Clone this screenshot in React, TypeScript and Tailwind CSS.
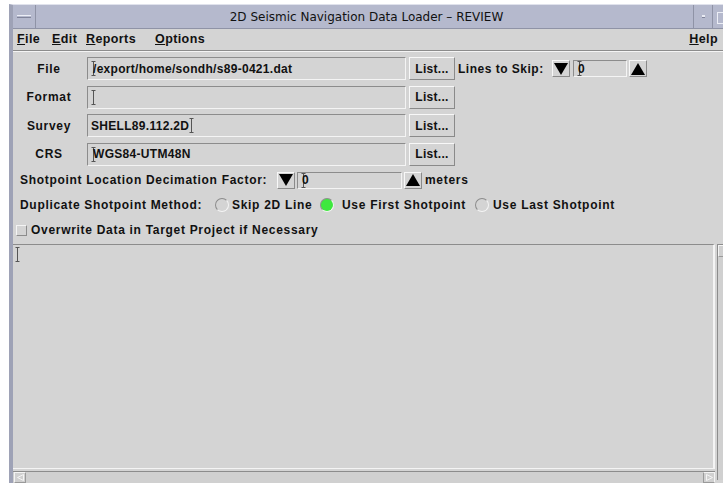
import type { ReactNode } from 'react'

const FONT = "font-['Liberation_Sans',Arial,sans-serif]"

// little text cursor drawn inside the entry fields
function Caret() {
  return (
    <svg width="5" height="15" viewBox="0 0 5 15" className="shrink-0">
      <path d="M0.5 0.5h4M0.5 14.5h4M2.5 0.5v14" stroke="#555" strokeWidth="1" fill="none" />
    </svg>
  )
}

function Field({ children, className = '' }: { children?: ReactNode; className?: string }) {
  return (
    <div className={`flex items-center h-full bg-[#d4d4d4] border border-t-[#8c8c8c] border-l-[#8c8c8c] border-b-[#f4f4f4] border-r-[#f4f4f4] px-[3px] text-[12px] font-bold tracking-[0.3px] text-[#111] ${className}`}>
      {children}
    </div>
  )
}

function Button({ children, className = '' }: { children: ReactNode; className?: string }) {
  return (
    <div className={`flex items-center justify-center bg-[#d4d4d4] border border-t-[#f8f8f8] border-l-[#f8f8f8] border-b-[#8a8a8a] border-r-[#8a8a8a] text-[12px] font-bold text-[#111] ${className}`}>
      {children}
    </div>
  )
}

function Arrow({ up }: { up?: boolean }) {
  return (
    <Button className="w-[18px] h-[17px]">
      <svg width="14" height="12" viewBox="0 0 14 12">
        {up ? <path d="M7 0L14 12H0Z" fill="#000" /> : <path d="M0 0H14L7 12Z" fill="#000" />}
      </svg>
    </Button>
  )
}

function Radio({ on }: { on?: boolean }) {
  return (
    <span className={`w-[14px] h-[14px] rounded-full shrink-0 border ${on ? 'bg-[#3ee83e] border-t-[#909090] border-l-[#909090] border-b-[#f4f4f4] border-r-[#f4f4f4]' : 'bg-[#d4d4d4] border-t-[#8c8c8c] border-l-[#8c8c8c] border-b-[#f4f4f4] border-r-[#f4f4f4]'}`} />
  )
}

const rows = [
  { label: 'File', value: '/export/home/sondh/s89-0421.dat', caret: 'start' },
  { label: 'Format', value: '', caret: 'start' },
  { label: 'Survey', value: 'SHELL89.112.2D', caret: 'end' },
  { label: 'CRS', value: 'WGS84-UTM48N', caret: 'start' },
]

export default function App() {
  return (
    <div className={`w-[723px] h-[483px] bg-white pt-[4px] pl-[9px] overflow-hidden ${FONT}`}>
      <div className="w-[740px] h-[500px] flex flex-col bg-[#d4d4d4] border-l-[4px] border-[#9ea2b6] border-t border-t-[#e0e2ec]">
        {/* title bar */}
        <div className="h-[24px] flex bg-[#b5b9cd] border-b border-b-[#8f93a6]">
          <div className="w-[23px] flex items-center justify-center border-r border-r-[#8f93a6]">
            <span className="w-[14px] h-[3px] border-t border-t-[#eceef6] border-b border-b-[#80849a]" />
          </div>
          <div className="flex-1 flex items-center justify-center pl-[4px] font-['DejaVu_Sans',sans-serif] text-[12px] text-[#111]">
            2D Seismic Navigation Data Loader – REVIEW
          </div>
          <div className="w-[19px] flex items-center justify-center border-l border-l-[#8f93a6]">
            <span className="w-[3px] h-[3px] bg-[#e8eaf2] border-b border-[#80849a]" />
          </div>
          <div className="w-[37px] flex items-start pt-[7px] pl-[4px] border-l border-l-[#8f93a6]">
            <span className="w-[14px] h-[12px] border border-[#eceef6] border-r-0" />
          </div>
        </div>

        {/* menu bar */}
        <div className="h-[22px] flex items-center text-[12.5px] font-bold tracking-[0.4px] text-[#111] pl-[4px] pr-[31px] border-b border-b-[#8c8c8c]">
          <span className="w-[35px]"><u>F</u>ile</span>
          <span className="w-[34px]"><u>E</u>dit</span>
          <span className="w-[69px]"><u>R</u>eports</span>
          <span><u>O</u>ptions</span>
          <span className="ml-auto"><u>H</u>elp</span>
        </div>
        <div className="h-px bg-[#f4f4f4]" />

        {/* source rows */}
        <div className="flex flex-col gap-[5.5px] mt-[5px]">
          {rows.map((r, i) => (
            <div key={r.label} className="flex items-center h-[23px]">
              <span className="w-[72px] text-center text-[12px] font-bold tracking-[0.7px] text-[#111]">{r.label}</span>
              <Field className="ml-[2px] w-[319px]">
                {r.caret === 'start' && <Caret />}
                <span className={r.caret === 'start' ? 'ml-[-3px]' : ''}>{r.value}</span>
                {r.caret === 'end' && <Caret />}
              </Field>
              <Button className="ml-[3px] w-[46px] h-full tracking-[0.3px]">List...</Button>
              {i === 0 && (
                <div className="flex items-center h-[17px] ml-[3px]">
                  <span className="text-[12px] font-bold tracking-[0.5px] text-[#111] w-[94px]">Lines to Skip:</span>
                  <Arrow />
                  <Field className="ml-[3px] w-[54px]">
                    <Caret />
                    <span className="ml-[-4px]">0</span>
                  </Field>
                  <span className="ml-[2px]"><Arrow up /></span>
                </div>
              )}
            </div>
          ))}
        </div>

        {/* decimation */}
        <div className="flex items-center h-[17px] mt-[6px] pl-[7px] text-[12px] font-bold tracking-[0.7px] text-[#111]">
          <span className="w-[257px]">Shotpoint Location Decimation Factor:</span>
          <Arrow />
          <Field className="ml-[2px] w-[105px]">
            <Caret />
            <span className="ml-[-4px]">0</span>
          </Field>
          <span className="ml-[2px]"><Arrow up /></span>
          <span className="ml-[3px]">meters</span>
        </div>

        {/* duplicate handling */}
        <div className="flex items-center h-[17px] mt-[8px] pl-[7px] text-[12px] font-bold tracking-[0.7px] text-[#111]">
          <span className="w-[195px]">Duplicate Shotpoint Method:</span>
          <Radio />
          <span className="ml-[3px] w-[88px]">Skip 2D Line</span>
          <Radio on />
          <span className="ml-[8px] w-[133px]">Use First Shotpoint</span>
          <Radio />
          <span className="ml-[4px]">Use Last Shotpoint</span>
        </div>

        <div className="flex items-center h-[17px] mt-[8px] pl-[3px] text-[12px] font-bold tracking-[0.7px] text-[#111]">
          <span className="w-[11px] h-[11px] border border-t-[#f4f4f4] border-l-[#f4f4f4] border-b-[#8c8c8c] border-r-[#8c8c8c] bg-[#d4d4d4]" />
          <span className="ml-[4px]">Overwrite Data in Target Project if Necessary</span>
        </div>

        {/* log output */}
        <div className="flex mt-[5px]">
          <div className="w-[702px] flex flex-col">
            <div className="h-[225px] border-t border-t-[#8c8c8c] border-r-2 border-r-[#f4f4f4] border-b border-b-[#f4f4f4] pl-[2px] pt-[2px]">
              <Caret />
            </div>
            <div className="h-[13px] mt-[2px] flex items-center justify-between border-t border-t-[#8c8c8c] bg-[#d0d0d0]">
              <div className="w-[12px] h-[11px] ml-[1px] border border-t-[#f4f4f4] border-l-[#f4f4f4] border-b-[#9a9a9a] border-r-[#9a9a9a] flex items-center justify-center">
                <svg width="7" height="7" viewBox="0 0 7 7"><path d="M6.5 0.5L0.5 3.5L6.5 6.5Z" fill="none" stroke="#f4f4f4" /></svg>
              </div>
              <div className="w-[12px] h-[11px] border border-t-[#f4f4f4] border-l-[#9a9a9a] border-b-[#9a9a9a] border-r-[#f4f4f4] flex items-center justify-center">
                <svg width="7" height="7" viewBox="0 0 7 7"><path d="M0.5 0.5L6.5 3.5L0.5 6.5Z" fill="none" stroke="#f4f4f4" /></svg>
              </div>
            </div>
          </div>
          <div className="ml-[2px] w-[14px] h-[236px] border-l border-l-[#8c8c8c] border-t border-t-[#8c8c8c] bg-[#d0d0d0]">
            <div className="w-[12px] h-[12px] border border-t-[#f4f4f4] border-l-[#f4f4f4] border-b-[#9a9a9a] border-r-[#9a9a9a]" />
          </div>
        </div>
      </div>
    </div>
  )
}
